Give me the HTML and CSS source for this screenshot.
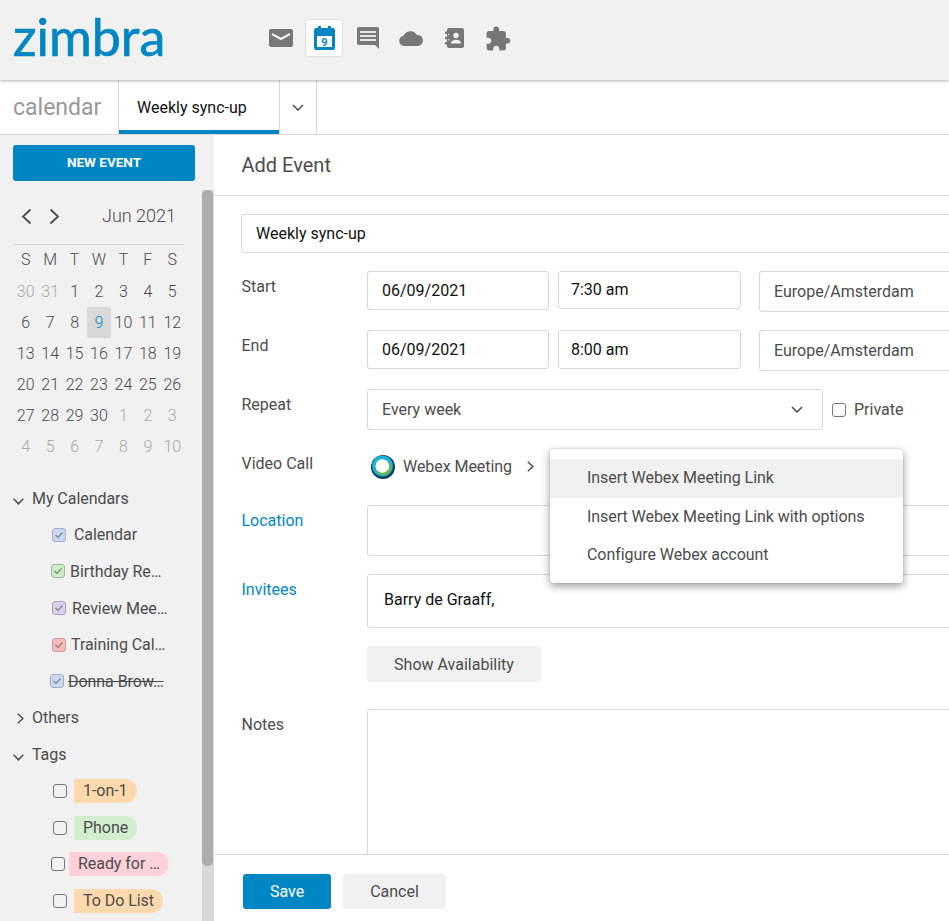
FILE: index.html
```html
<!DOCTYPE html>
<html lang="en">
<head>
<meta charset="utf-8">
<title>Zimbra Calendar</title>
<link rel="stylesheet" href="styles.css">
</head>
<body>
<div class="app">
  <header class="topbar">
    <div class="logo">zimbra</div>
    <nav class="apps">
      <span class="app-slot"><svg width="24" height="18" viewBox="0 0 24 18"><path class="ic" d="M2 0h20a2 2 0 012 2v14a2 2 0 01-2 2H2a2 2 0 01-2-2V2a2 2 0 012-2z"/><path d="M3 5l9 5 9-5" fill="none" stroke="#f1f1f1" stroke-width="2.2"/></svg></span>
      <span class="app-slot active"><svg width="21" height="24" viewBox="0 0 21 24"><rect y="2" width="21" height="22" rx="2" fill="#0087c3"/><rect x="4" width="3" height="5" fill="#0087c3"/><rect x="14" width="3" height="5" fill="#0087c3"/><rect x="3" y="10" width="15" height="11" fill="#fff"/><text x="10.5" y="20" class="cal-num">9</text></svg></span>
      <span class="app-slot"><svg width="22" height="22" viewBox="0 0 22 22"><path class="ic" d="M2 0h18a2 2 0 012 2v20l-4-4H2a2 2 0 01-2-2V2a2 2 0 012-2z"/><path d="M3 4h16v2H3zM3 8h16v2H3zM3 12h16v2H3z" fill="#e6e6e6"/></svg></span>
      <span class="app-slot"><svg width="24" height="16" viewBox="0 0 24 16"><path class="ic" d="M5 16a5 5 0 01-.6-9.9A7.5 7.5 0 0118 5a5.5 5.5 0 011 11z"/></svg></span>
      <span class="app-slot"><svg width="19" height="20" viewBox="0 0 19 20"><rect class="ic" x="2" width="17" height="20" rx="2"/><path class="ic" d="M0 3.500h4v2.500H0zM0 8.800h4v2.500H0zM0 14h4v2.500H0z"/><path d="M3 6.500h1.500M3 11.800h1.500" stroke="#f1f1f1"/><circle cx="11" cy="7.500" r="2.700" fill="#f1f1f1"/><path d="M6 15.500c0-2.700 2.800-3.700 5-3.700s5 1 5 3.700z" fill="#f1f1f1"/></svg></span>
      <span class="app-slot"><svg width="25" height="25" viewBox="1.500 1 22 21"><path class="ic" d="M20.500 11H19V7c0-1.100-.9-2-2-2h-4V3.500C13 2.120 11.880 1 10.500 1S8 2.120 8 3.500V5H4c-1.100 0-1.990.9-1.990 2v3.800H3.500c1.490 0 2.700 1.210 2.700 2.700s-1.210 2.700-2.700 2.700H2V20c0 1.100.9 2 2 2h3.800v-1.500c0-1.490 1.210-2.700 2.700-2.700 1.490 0 2.700 1.210 2.700 2.700V22H17c1.100 0 2-.9 2-2v-4h1.500c1.380 0 2.500-1.120 2.500-2.500S21.880 11 20.500 11z"/></svg></span>
    </nav>
  </header>

  <div class="subbar">
    <div class="section-name">calendar</div>
    <div class="tab">Weekly sync-up</div>
    <div class="tab-more"><svg class="chev" width="12" height="7" viewBox="0 0 12 7"><path d="M1 1l5 5 5-5"/></svg></div>
  </div>

  <div class="body">
    <aside class="sidebar">
      <button class="new-event">NEW EVENT</button>
      <div class="mini-nav">
        <svg class="chev nav-arrow" width="11" height="17" viewBox="0 0 11 17"><path d="M9.500 1.500l-7.500 7 7.500 7"/></svg>
        <svg class="chev nav-arrow" width="11" height="17" viewBox="0 0 11 17"><path d="M1.500 1.500l7.500 7-7.500 7"/></svg>
        <span class="month">Jun 2021</span>
      </div>
      <div class="mini-grid">
        <span>S</span><span>M</span><span>T</span><span>W</span><span>T</span><span>F</span><span>S</span>
        <span class="off">30</span><span class="off">31</span><span>1</span><span>2</span><span>3</span><span>4</span><span>5</span>
        <span>6</span><span>7</span><span>8</span><span class="today">9</span><span>10</span><span>11</span><span>12</span>
        <span>13</span><span>14</span><span>15</span><span>16</span><span>17</span><span>18</span><span>19</span>
        <span>20</span><span>21</span><span>22</span><span>23</span><span>24</span><span>25</span><span>26</span>
        <span>27</span><span>28</span><span>29</span><span>30</span><span class="off">1</span><span class="off">2</span><span class="off">3</span>
        <span class="off">4</span><span class="off">5</span><span class="off">6</span><span class="off">7</span><span class="off">8</span><span class="off">9</span><span class="off">10</span>
      </div>
      <ul class="tree">
        <li class="group"><svg class="chev tw-down" width="11" height="7" viewBox="0 0 11 7"><path d="M.8.8l4.700 5 4.700-5"/></svg>My Calendars</li>
        <li class="item in-52 gap-8"><span class="box tint-blue"><svg width="12" height="12" viewBox="0 0 12 12"><path d="M2.500 6l2.500 2.500 4.500-5"/></svg></span>Calendar</li>
        <li class="item in-51 gap-5"><span class="box tint-green"><svg width="12" height="12" viewBox="0 0 12 12"><path d="M2.500 6l2.500 2.500 4.500-5"/></svg></span>Birthday Re…</li>
        <li class="item in-52 gap-6"><span class="box tint-purple"><svg width="12" height="12" viewBox="0 0 12 12"><path d="M2.500 6l2.500 2.500 4.500-5"/></svg></span>Review Mee…</li>
        <li class="item in-52 gap-5"><span class="box tint-red"><svg width="12" height="12" viewBox="0 0 12 12"><path d="M2.500 6l2.500 2.500 4.500-5"/></svg></span>Training Cal…</li>
        <li class="item in-50 gap-4"><span class="box tint-blue"><svg width="12" height="12" viewBox="0 0 12 12"><path d="M2.500 6l2.500 2.500 4.500-5"/></svg></span><s>Donna Brow…</s></li>
        <li class="group"><svg class="chev tw-right" width="7" height="11" viewBox="0 0 7 11"><path d="M.8.8l5 4.700-5 4.700"/></svg>Others</li>
        <li class="group"><svg class="chev tw-down" width="11" height="7" viewBox="0 0 11 7"><path d="M.8.8l4.700 5 4.700-5"/></svg>Tags</li>
        <li class="item in-53 gap-7"><span class="box"></span><span class="tag orange">1-on-1</span></li>
        <li class="item in-53 gap-7"><span class="box"></span><span class="tag green">Phone</span></li>
        <li class="item in-51 gap-4"><span class="box"></span><span class="tag pink">Ready for …</span></li>
        <li class="item in-53 gap-7"><span class="box"></span><span class="tag orange">To Do List</span></li>
      </ul>
      <div class="scroll-track"><div class="scroll-thumb"></div></div>
    </aside>

    <main class="main">
      <h1 class="title">Add Event</h1>
      <form class="form">
        <div class="field subject dark">Weekly sync-up</div>

        <div class="row">
          <label class="lbl">Start</label>
          <div class="cell">
            <div class="field date dark">06/09/2021</div>
            <div class="field time dark">7:30 am</div>
            <div class="field tz">Europe/Amsterdam</div>
          </div>
        </div>
        <div class="row">
          <label class="lbl">End</label>
          <div class="cell">
            <div class="field date dark">06/09/2021</div>
            <div class="field time time-tall dark">8:00 am</div>
            <div class="field tz">Europe/Amsterdam</div>
          </div>
        </div>
        <div class="row">
          <label class="lbl">Repeat</label>
          <div class="cell cell-center">
            <div class="field repeat">Every week<svg class="chev" width="12" height="7" viewBox="0 0 12 7"><path d="M1 1l5 5 5-5"/></svg></div>
            <span class="box private-box"></span><span class="private">Private</span>
          </div>
        </div>
        <div class="row">
          <label class="lbl">Video Call</label>
          <div class="cell video">
            <svg class="webex" width="24" height="24" viewBox="0 0 24 24"><circle cx="12" cy="12" r="12" fill="#0a3c5f"/><circle cx="11.500" cy="11" r="10.500" fill="#17b3de"/><circle cx="12.500" cy="12.500" r="7.800" fill="#6db545"/><circle cx="11.300" cy="11" r="6.800" fill="#fff"/></svg>
            <span class="video-name">Webex Meeting</span>
            <svg class="chev video-arrow" width="7" height="11" viewBox="0 0 7 11"><path d="M.8.8l5 4.700-5 4.700"/></svg>
            <ul class="menu">
              <li class="hover">Insert Webex Meeting Link</li>
              <li>Insert Webex Meeting Link with options</li>
              <li>Configure Webex account</li>
            </ul>
          </div>
        </div>
        <div class="row">
          <label class="lbl link">Location</label>
          <div class="field wide location"></div>
        </div>
        <div class="row">
          <label class="lbl link">Invitees</label>
          <div class="field wide invitees dark">Barry de Graaff,</div>
        </div>
        <div class="row">
          <span></span>
          <div class="cell"><button type="button" class="btn avail">Show Availability</button></div>
        </div>
        <div class="row notes-row">
          <label class="lbl">Notes</label>
          <div class="field wide notes"></div>
        </div>
      </form>
      <footer class="footer">
        <button class="btn save">Save</button>
        <button class="btn cancel">Cancel</button>
      </footer>
    </main>
  </div>
</div>
</body>
</html>
```

FILE: styles.css
```css
* { box-sizing: border-box; }
html, body { margin: 0; padding: 0; }
body {
  font-family: Roboto, "Liberation Sans", sans-serif;
  font-size: 16px;
  color: #4c4c4c;
  background: #fff;
  overflow: hidden;
}
ul { list-style: none; margin: 0; padding: 0; }
button { font-family: inherit; border: 0; }

.app { display: flex; flex-direction: column; height: 921px; overflow: hidden; }

/* top bar */
.topbar {
  flex: none;
  height: 80px;
  display: flex;
  align-items: center;
  background: #f1f1f1;
  box-shadow: 0 1px 3px rgba(0, 0, 0, .3);
  position: relative;
  z-index: 2;
}
.logo {
  width: 261.5px;
  padding: 0 0 8px 13px;
  font-family: Lato, sans-serif;
  font-size: 52px;
  line-height: 60px;
  color: #0087c3;
  -webkit-text-stroke: .7px #0087c3;
}
.apps { display: flex; gap: 5.5px; margin-bottom: 4px; }
.app-slot {
  width: 38px;
  height: 38px;
  display: flex;
  align-items: center;
  justify-content: center;
  border: 1px solid transparent;
  border-radius: 3px;
}
.app-slot.active { background: #fff; border-color: #ddd; }
.ic { fill: #777; }
.cal-num { font: 700 11px Roboto, sans-serif; fill: #0087c3; text-anchor: middle; }

/* sub bar */
.subbar {
  flex: none;
  height: 55px;
  display: flex;
  align-items: stretch;
  background: #fff;
  border-bottom: 1px solid #d8d8d8;
}
.section-name {
  width: 118px;
  padding-left: 13px;
  font-size: 23px;
  line-height: 55px;
  color: #999;
}
.tab {
  width: 162px;
  padding-left: 18px;
  line-height: 56px;
  color: #111;
  border-left: 1px solid #d8d8d8;
  border-right: 1px solid #d8d8d8;
  box-shadow: inset 0 -4px 0 #0087c3;
}
.tab-more {
  width: 37px;
  display: flex;
  align-items: center;
  justify-content: center;
  border-right: 1px solid #d8d8d8;
}
.chev { fill: none; stroke: #4c4c4c; stroke-width: 1.5; flex: none; }

/* layout */
.body { flex: 1; display: flex; min-height: 0; }

/* sidebar */
.sidebar {
  flex: none;
  width: 214px;
  padding: 10px 0 0 13px;
  background: #f1f1f1;
  position: relative;
  overflow: hidden;
}
.new-event {
  display: block;
  width: 182px;
  height: 36px;
  padding-bottom: 4px;
  background: #0087c3;
  color: #fff;
  font-size: 13.500px;
  font-weight: 700;
  border-radius: 3px;
}
.mini-nav {
  width: 171px;
  height: 64px;
  padding: 8px 8px 0 8px;
  display: flex;
  align-items: center;
  gap: 17px;
  border-bottom: 1px solid #d8d8d8;
}
.nav-arrow { stroke-width: 1.8; }
.month { margin: 0 0 2px auto; font-size: 18px; font-weight: 300; }
.mini-grid {
  width: 171.500px;
  padding-left: .5px;
  display: grid;
  grid-template-columns: repeat(7, 1fr);
  grid-auto-rows: 31px;
  font-weight: 300;
  text-align: center;
  line-height: 31px;
}
.mini-grid span:nth-child(-n+7) { line-height: 29px; }
.mini-grid .off { color: #aaa; }
.mini-grid .today { background: #d8d8d8; border-radius: 2px; color: #0087c3; }
.tree { margin: 18px 0 0 -13px; letter-spacing: -.05px; }
.group, .item { height: 36.6px; display: flex; align-items: center; white-space: nowrap; }
.group { padding-left: 32px; position: relative; }
.tw-down { position: absolute; left: 13px; top: 18px; }
.tw-right { position: absolute; left: 17px; top: 13px; }
.in-50 { padding-left: 50px; }
.in-51 { padding-left: 51px; }
.in-52 { padding-left: 52px; }
.in-53 { padding-left: 53px; }
.gap-4 { gap: 4px; }
.gap-5 { gap: 5px; }
.gap-6 { gap: 6px; }
.gap-7 { gap: 7px; }
.gap-8 { gap: 8px; }
.box {
  flex: none;
  width: 14px;
  height: 14px;
  border: 1.5px solid #777;
  border-radius: 3px;
  display: flex;
  align-items: center;
  justify-content: center;
}
.box svg { fill: none; stroke: #808080; stroke-width: 1.2; }
.tint-blue { background: #c9d9f5; border-color: #a5aec6; }
.tint-green { background: #cbedc6; border-color: #a6b5a6; }
.tint-purple { background: #dcd0ea; border-color: #aea6bb; }
.tint-red { background: #fbb9b9; border-color: #c9a0a0; }
.tag {
  height: 24px;
  min-width: 63px;
  padding: 0 9px;
  line-height: 24px;
  border-radius: 0 12px 12px 0;
}
.orange { background: #ffd9ae; }
.green { background: #d3eecf; }
.pink { background: #ffd1da; }
.scroll-track {
  position: absolute;
  left: 202px;
  top: 55px;
  bottom: 0;
  width: 12px;
  background: #d8d8d8;
}
.scroll-thumb {
  width: 11px;
  height: 676px;
  background: #adadad;
  border-radius: 5px;
}

/* main */
.main { flex: 1; min-width: 0; display: flex; flex-direction: column; overflow: hidden; }
.title {
  flex: none;
  height: 61px;
  margin: 0;
  padding-left: 27.500px;
  font-size: 20px;
  font-weight: 400;
  line-height: 60px;
  border-bottom: 1px solid #d8d8d8;
}
.form {
  flex: 1;
  min-height: 0;
  width: 900px;
  padding: 18px 0 0 27px;
  overflow: hidden;
}
.field {
  display: flex;
  align-items: center;
  padding-left: 14px;
  background: #fff;
  border: 1px solid #d8d8d8;
  border-radius: 3px;
}
.dark { color: #111; }
.subject { height: 39px; margin-bottom: 18px; }
.row { display: grid; grid-template-columns: 126px 1fr; margin-bottom: 18px; }
.lbl { padding: 6px 0 0 .5px; line-height: 20px; }
.link { color: #0087c3; }
.cell { display: flex; align-items: flex-start; min-height: 36px; }
.cell-center { align-items: center; }
.date { width: 182px; height: 39px; padding-bottom: 1px; }
.time { width: 183px; height: 38px; margin-left: 9px; padding-left: 12px; padding-bottom: 1px; }
.time-tall { height: 39px; padding-bottom: 0; }
.tz { flex: 1; height: 41px; margin-left: 18px; }
.repeat { width: 456px; height: 41px; justify-content: space-between; padding-right: 19px; }
.private-box { margin-left: 9px; }
.private { margin-left: 8px; }
.video { position: relative; align-items: center; height: 39px; padding: 0 0 2px 4px; }
.webex { margin-right: 8px; }
.video-name { letter-spacing: -.05px; }
.video-arrow { margin-left: 15px; }
.menu {
  position: absolute;
  left: 183px;
  top: 1px;
  width: 353px;
  height: 134px;
  padding-top: 10px;
  background: #fff;
  border-radius: 3px;
  letter-spacing: -.05px;
  box-shadow: 0 0 1px rgba(0, 0, 0, .4), 0 3px 8px rgba(0, 0, 0, .4);
  z-index: 3;
}
.menu li { height: 38.500px; line-height: 38px; padding-left: 37px; }
.menu .hover { background: #f1f1f1; }
.wide { width: 100%; }
.location { height: 51px; }
.invitees { height: 54px; padding: 0 0 4px 16px; }
.btn { height: 36px; border-radius: 3px; font-size: 16px; color: #4c4c4c; background: #f1f1f1; }
.avail { width: 174px; }
.notes-row { margin-top: 27px; margin-bottom: 0; }
.notes { height: 400px; }
.footer {
  flex: none;
  height: 67px;
  display: flex;
  align-items: flex-start;
  gap: 12px;
  padding: 19px 0 0 29px;
  border-top: 1px solid #d8d8d8;
  background: #fff;
}
.save { width: 88px; height: 35px; background: #0087c3; color: #fff; }
.cancel { width: 103px; height: 35px; }
```
